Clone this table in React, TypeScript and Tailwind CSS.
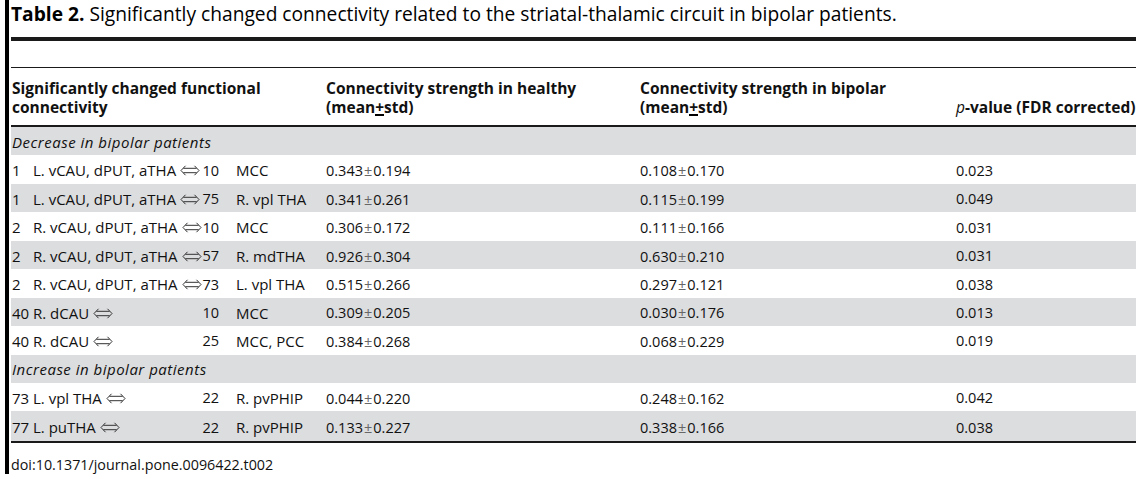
import React from "react";

type Row = {
  idx: string;
  src: string;
  num: string;
  tgt: string;
  h: string;
  b: string;
  p: string;
  gray: boolean;
};

const rows1: Row[] = [
  { idx: "1", src: "L. vCAU, dPUT, aTHA", num: "10", tgt: "MCC", h: "0.343|0.194", b: "0.108|0.170", p: "0.023", gray: false },
  { idx: "1", src: "L. vCAU, dPUT, aTHA", num: "75", tgt: "R. vpl THA", h: "0.341|0.261", b: "0.115|0.199", p: "0.049", gray: true },
  { idx: "2", src: "R. vCAU, dPUT, aTHA", num: "10", tgt: "MCC", h: "0.306|0.172", b: "0.111|0.166", p: "0.031", gray: false },
  { idx: "2", src: "R. vCAU, dPUT, aTHA", num: "57", tgt: "R. mdTHA", h: "0.926|0.304", b: "0.630|0.210", p: "0.031", gray: true },
  { idx: "2", src: "R. vCAU, dPUT, aTHA", num: "73", tgt: "L. vpl THA", h: "0.515|0.266", b: "0.297|0.121", p: "0.038", gray: false },
  { idx: "40", src: "R. dCAU", num: "10", tgt: "MCC", h: "0.309|0.205", b: "0.030|0.176", p: "0.013", gray: true },
  { idx: "40", src: "R. dCAU", num: "25", tgt: "MCC, PCC", h: "0.384|0.268", b: "0.068|0.229", p: "0.019", gray: false },
];

const rows2: Row[] = [
  { idx: "73", src: "L. vpl THA", num: "22", tgt: "R. pvPHIP", h: "0.044|0.220", b: "0.248|0.162", p: "0.042", gray: false },
  { idx: "77", src: "L. puTHA", num: "22", tgt: "R. pvPHIP", h: "0.133|0.227", b: "0.338|0.166", p: "0.038", gray: true },
];

function Arrow() {
  return (
    <svg width="20" height="11" viewBox="0 0 20 11" className="inline-block align-baseline ml-[4px]" aria-label="⇔">
      <path
        d="M5.5 0.8 L1 5.5 L5.5 10.2 M14.5 0.8 L19 5.5 L14.5 10.2 M3.4 3.3 H16.6 M3.4 7.7 H16.6"
        fill="none"
        stroke="#333"
        strokeWidth="1"
      />
    </svg>
  );
}

function Val({ v }: { v: string }) {
  const [a, b] = v.split("|");
  return (
    <span className="text-[14.5px]">
      {a}
      <span className="text-[#666] px-[1px]">±</span>
      {b}
    </span>
  );
}

function DataRow({ r, last }: { r: Row; last?: boolean }) {
  return (
    <div
      className={`flex items-center ${last ? "h-[30px]" : "h-[28.45px]"} pt-[2px] ${r.gray ? "bg-[#dcdddf]" : "bg-white"}`}
    >
      <div className="w-[22px] pl-[1px] shrink-0">{r.idx}</div>
      <div className="w-[168px] shrink-0 whitespace-nowrap">
        {r.src}
        <Arrow />
      </div>
      <div className="w-[18px] shrink-0 text-right text-[14.5px]">{r.num}</div>
      <div className="w-[17px] shrink-0" />
      <div className="w-[90px] shrink-0 whitespace-nowrap">{r.tgt}</div>
      <div className="w-[314px] shrink-0"><Val v={r.h} /></div>
      <div className="w-[316px] shrink-0"><Val v={r.b} /></div>
      <div className="flex-1 text-[14.5px]">{r.p}</div>
    </div>
  );
}

function Pm() {
  return <span className="inline-block border-b-2 border-black leading-[13px]">+</span>;
}

export default function App() {
  return (
    <div
      className="bg-white w-[1141px] h-[479px] pl-[5px] text-[#111] text-[15px]"
      style={{ fontFamily: '"Open Sans", "Noto Sans", "DejaVu Sans", sans-serif' }}
    >
      <div className="border-l-4 border-black w-[1131px] pl-[2px] pb-[1px]">
        <div className="h-[37px] pt-[1px] text-[19.2px] leading-[26px] text-black whitespace-nowrap">
          <span className="font-bold">Table 2.</span> Significantly changed connectivity related to the striatal-thalamic circuit in bipolar patients.
        </div>
        <div className="h-[4px] bg-[#1a1a1a]" />
        <div className="h-[26px]" />
        <div className="h-[1px] bg-[#1a1a1a]" />
        <div className="flex items-end h-[57px] pb-[8px] font-bold text-[15.5px] leading-[19px]">
          <div className="w-[315px] shrink-0 pl-[1px]">
            <div>Significantly changed functional</div>
            <div>connectivity</div>
          </div>
          <div className="w-[314px] shrink-0">
            <div>Connectivity strength in healthy</div>
            <div>
              (mean<Pm />std)
            </div>
          </div>
          <div className="w-[316px] shrink-0">
            <div>Connectivity strength in bipolar</div>
            <div>
              (mean<Pm />std)
            </div>
          </div>
          <div className="flex-1 text-right pr-[3px] whitespace-nowrap">
            <span className="italic font-normal">p</span>-value (FDR corrected)
          </div>
        </div>
        <div className="h-[2px] bg-[#1a1a1a]" />
        <div className="flex items-center h-[28.45px] pt-[2px] pl-[1px] bg-[#dcdddf] italic tracking-[0.5px]">
          Decrease in bipolar patients
        </div>
        {rows1.map((r, i) => (
          <DataRow key={i} r={r} />
        ))}
        <div className="flex items-center h-[28.45px] pt-[2px] pl-[1px] bg-[#dcdddf] italic tracking-[0.5px]">
          Increase in bipolar patients
        </div>
        {rows2.map((r, i) => (
          <DataRow key={i} r={r} last={i === rows2.length - 1} />
        ))}
        <div className="h-[2px] bg-[#1a1a1a]" />
        <div className="h-[30px] flex items-end text-[14.3px] leading-[16px]">doi:10.1371/journal.pone.0096422.t002</div>
      </div>
    </div>
  );
}
